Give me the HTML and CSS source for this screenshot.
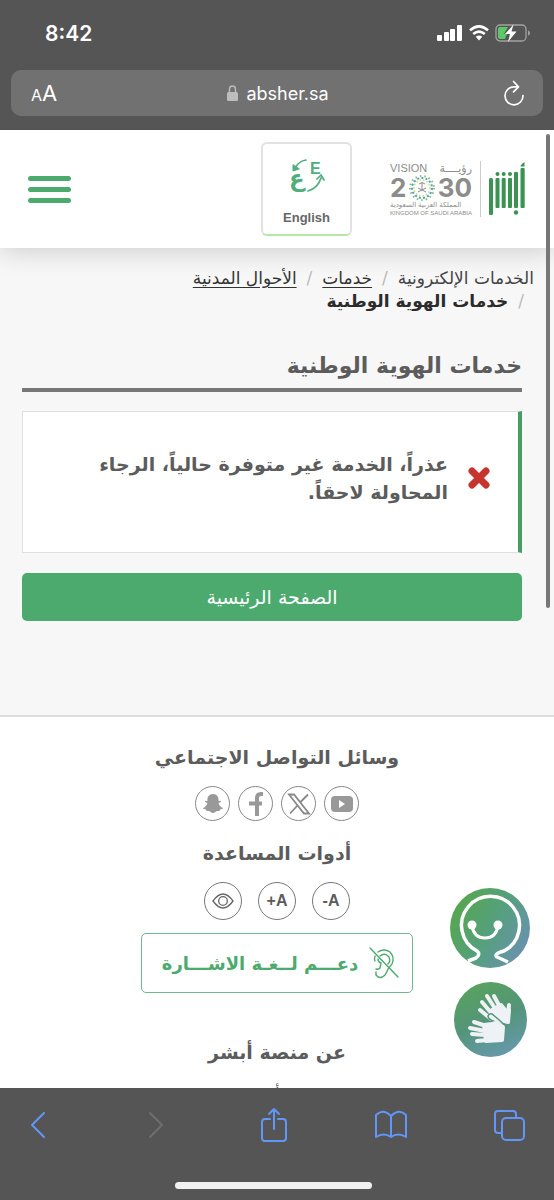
FILE: index.html
```html
<!DOCTYPE html>
<html lang="ar">
<head>
    <meta charset="UTF-8">
    <meta name="viewport" content="width=device-width, initial-scale=1">
    <title>خدمات الهوية الوطنية</title>
    <link rel="stylesheet" href="styles.css">
</head>
<body>
    <div class="browser-top">
        <div class="status-bar">
            <span class="clock">8:42</span>
            <div class="status-icons">
                <svg width="26" height="18" viewBox="0 0 26 18" fill="#fff">
                    <rect x="0" y="11" width="5" height="6" rx="1"/>
                    <rect x="7" y="8" width="5" height="9" rx="1"/>
                    <rect x="13" y="5" width="5" height="12" rx="1"/>
                    <rect x="20" y="1" width="5" height="16" rx="1"/>
                </svg>
                <svg width="20" height="18" viewBox="0 0 20 18" fill="none" stroke="#fff" stroke-width="2.6">
                    <path d="M1 6.2Q10-1.6 19 6.2"/>
                    <path d="M4.2 9.9Q10 5.2 15.8 9.9"/>
                    <path d="M6.7 12.8Q10 10.4 13.3 12.8L10 16.6Z" fill="#fff" stroke="none"/>
                </svg>
                <svg width="35" height="20" viewBox="0 0 35 20">
                    <rect x="1" y="2" width="30" height="16" rx="4" fill="none" stroke="#a3a3a3" stroke-width="1.3"/>
                    <path d="M33 7.5q2 .5 2 2.5t-2 2.5z" fill="#a3a3a3"/>
                    <path d="M5 4h8l-4 7h3l-2 5H5q-2 0-2-2V6q0-2 2-2z" fill="#5cc866"/>
                    <path d="M18.5 1.5L10 11h5l-2 8 8.5-10.5h-5z" fill="#fff"/>
                </svg>
            </div>
        </div>
        <div class="address-bar">
            <button class="text-size" aria-label="Text size"><small>A</small>A</button>
            <div class="address">
                <svg width="11" height="16" viewBox="0 0 11 16">
                    <path d="M2.5 8V4.5a3 3.5 0 0 1 6 0V8" fill="none" stroke="#bdbdbf" stroke-width="1.4"/>
                    <rect x="0" y="7" width="11" height="9" rx="1.5" fill="#bdbdbf"/>
                </svg>
                <span>absher.sa</span>
            </div>
            <button class="reload" aria-label="Reload">
                <svg width="22" height="26" viewBox="0 0 22 26" fill="none" stroke="#fff" stroke-width="1.7" stroke-linecap="round" stroke-linejoin="round">
                    <path d="M15 6.8H11A9 9 0 1 0 20 15.5"/>
                    <path d="M10.5 1.5l5 5.3-5 5"/>
                </svg>
            </button>
        </div>
    </div>

    <div class="site-frame">
        <div class="site" dir="rtl">
            <header class="site-header">
                <div class="brand">
                    <svg class="absher-logo" width="37" height="54" viewBox="0 0 37 54" role="img" aria-label="أبشر" fill="#3a9350">
                        <rect x="0" y="16" width="4" height="37" rx="1.5"/>
                        <rect x="6.5" y="16" width="4" height="30" rx="1"/>
                        <rect x="12.7" y="16" width="4" height="30" rx="1"/>
                        <rect x="19" y="16" width="4" height="30" rx="1"/>
                        <rect x="25" y="10" width="4" height="36" rx="1"/>
                        <rect x="31.5" y="6" width="4.2" height="40" rx="1"/>
                        <circle cx="8.5" cy="12" r="2"/>
                        <circle cx="14.7" cy="12" r="2"/>
                        <circle cx="21" cy="12" r="2"/>
                        <circle cx="27" cy="50.5" r="2.2"/>
                        <path d="M31.5 4.500q0-2 4-4.500v4.500z"/>
                    </svg>
                    <div class="vision" dir="ltr">
                        <div class="vision-title"><span>VISION</span><span>رؤيــــة</span></div>
                        <div class="vision-year">
                            <span>2</span>
                            <svg width="28" height="28" viewBox="0 0 28 28" fill="none">
                                <circle cx="14" cy="14" r="12" stroke="#7fbf80" stroke-width="2" stroke-dasharray="1.5 3"/>
                                <circle cx="14" cy="14" r="10" stroke="#5b9fba" stroke-width="2" stroke-dasharray="2 2.2"/>
                                <circle cx="14" cy="14" r="8" stroke="#c6d97b" stroke-width="1.5" stroke-dasharray="1.5 2"/>
                                <path d="M14 8v8M11 10q3-3 6 0M10 18l8-4M18 18l-8-4" stroke="#8c8c8c"/>
                            </svg>
                            <span>30</span>
                        </div>
                        <div class="vision-ar">المملكة العربية السعودية</div>
                        <div class="vision-en">KINGDOM OF SAUDI ARABIA</div>
                    </div>
                </div>
                <a class="lang" href="#" lang="en">
                    <svg width="38" height="38" viewBox="0 0 38 38" fill="none" stroke="#4fae7c" stroke-width="1.7" stroke-linecap="round">
                        <path d="M19 2Q12 3 8 10"/>
                        <path d="M6 7v6l6-2z" fill="#4fae7c" stroke-width="1"/>
                        <path d="M21 33q10-3 13-13M30 21l4-4 3 5"/>
                        <text class="lang-ar" x="2" y="28">ع</text>
                        <text class="lang-en" x="23" y="16">E</text>
                    </svg>
                    <span>English</span>
                </a>
                <button class="menu" aria-label="القائمة"><i></i><i></i><i></i></button>
            </header>

            <nav class="breadcrumb">
                <ol>
                    <li>الخدمات الإلكترونية</li>
                    <li><a href="#">خدمات</a></li>
                    <li><a href="#">الأحوال المدنية</a></li>
                    <li class="current">خدمات الهوية الوطنية</li>
                </ol>
            </nav>

            <main class="content">
                <h1>خدمات الهوية الوطنية</h1>
                <div class="alert" role="alert">
                    <svg width="22" height="22" viewBox="0 0 22 22" stroke="#c5352d" stroke-width="7" stroke-linecap="round">
                        <path d="M4 4l14 14M18 4L4 18"/>
                    </svg>
                    <p>عذراً، الخدمة غير متوفرة حالياً، الرجاء المحاولة لاحقاً.</p>
                </div>
                <a class="home-btn" href="#">الصفحة الرئيسية</a>
            </main>

            <footer class="site-footer">
                <h2>وسائل التواصل الاجتماعي</h2>
                <div class="social">
                    <a href="#" aria-label="YouTube">
                        <svg width="24" height="24" viewBox="0 0 24 24"><rect x="1" y="4" width="22" height="16" rx="4" fill="#999"/><path d="M9 8v8l6-4z" fill="#fff"/></svg>
                    </a>
                    <a href="#" aria-label="X">
                        <svg width="24" height="24" viewBox="0 0 24 24" fill="none" stroke="#888" stroke-width="1.8"><path d="M2 2.5h5l15 19h-5zM21 2.5l-8 8M10.5 13.5L3 21.5"/></svg>
                    </a>
                    <a href="#" aria-label="Facebook">
                        <svg width="24" height="26" viewBox="0 0 24 26" fill="none" stroke="#999" stroke-width="4"><path d="M19 3h-2q-4 0-4 4v18M5 12.5h13"/></svg>
                    </a>
                    <a href="#" aria-label="Snapchat">
                        <svg width="22" height="22" viewBox="0 0 22 22" fill="#999"><path d="M11 1c4 0 6 3 5.500 7l2-.3c1 .6.500 1.500-2 2.300.8 2.500 2 4 4.500 5-.3 1-1.500 1.300-3 1.500l-.6 1.500c-2.400-.3-3 0-4 1-1.500 1.300-3.300 1.300-4.800 0-1-1-1.600-1.300-4-1L4 16.500c-1.500-.2-2.700-.5-3-1.500 2.500-1 3.700-2.500 4.500-5-2.500-.8-3-1.700-2-2.300l2 .3C5 4 7 1 11 1z"/></svg>
                    </a>
                </div>
                <h2>أدوات المساعدة</h2>
                <div class="tools">
                    <button aria-label="تصغير الخط" dir="ltr">-A</button>
                    <button aria-label="تكبير الخط" dir="ltr">+A</button>
                    <button aria-label="التباين">
                        <svg width="22" height="16" viewBox="0 0 22 16" fill="none" stroke="#666" stroke-width="1.3"><path d="M1 8q10-14 20 0-10 14-20 0z"/><circle cx="11" cy="8" r="4.3"/></svg>
                    </button>
                </div>
                <button class="sign-btn">
                    <svg width="30" height="32" viewBox="0 0 30 32" fill="none" stroke="#4daa6f" stroke-width="1.4" stroke-linecap="round">
                        <path d="M1 1l28 29"/>
                        <path d="M9 5q6-4 12 0 5 5 2 12l-4 5q-1 3-3 6-5 5-9 0v-3"/>
                        <path d="M6 9q-1 3 0 5M11 9q5-4 9 1 2 4-1 7M9 12q0 3 3 4l-1 5q-2 2-4 1"/>
                    </svg>
                    <span>دعـــم لــغـة الاشـــارة</span>
                </button>
                <h2>عن منصة أبشر</h2>
                <a class="about-link" href="#">عن أبشر</a>
            </footer>
        </div>

        <div class="floating">
            <button class="assistant" aria-label="المساعد">
                <svg viewBox="0 0 80 80">
                    <defs>
                        <linearGradient id="assistant-fill" x1="0.1" y1="0.2" x2="1" y2="0.7">
                            <stop offset="0" stop-color="#56a652"/>
                            <stop offset="0.5" stop-color="#55a07d"/>
                            <stop offset="1" stop-color="#6a91b0"/>
                        </linearGradient>
                    </defs>
                    <circle cx="40" cy="40" r="40" fill="url(#assistant-fill)"/>
                    <g fill="none" stroke="#fff" stroke-width="3.5" stroke-linejoin="round">
                        <path d="M18 73l8-3q5-4 1-7A29 29 0 1 1 54 63q-11 3-7 6l11 5"/>
                        <path d="M22 38q2 12 13 12t13-12" stroke-width="3"/>
                    </g>
                    <circle cx="22" cy="37" r="4.5" fill="#fff"/>
                    <circle cx="48" cy="37" r="4.5" fill="#fff"/>
                </svg>
            </button>
            <button class="sign-help" aria-label="لغة الإشارة">
                <svg viewBox="0 0 73 75">
                    <defs>
                        <linearGradient id="sign-fill" x1="0.3" y1="0" x2="0.7" y2="1">
                            <stop offset="0" stop-color="#58a25e"/>
                            <stop offset="0.5" stop-color="#549579"/>
                            <stop offset="1" stop-color="#6699ad"/>
                        </linearGradient>
                    </defs>
                    <ellipse cx="36.5" cy="37.5" rx="36.5" ry="37.5" fill="url(#sign-fill)"/>
                    <g stroke="#eef1f5" stroke-width="4" stroke-linecap="round" stroke-linejoin="round" fill="#eef1f5">
                        <path d="M36 34l2-6 9-5 5 6 3-1-1 12-4-1z"/>
                        <path d="M26 28l11 9M28 20l11 13M33 14l9 14M40 14l7 13M55 23l-1 10"/>
                    </g>
                    <path d="M53 45l-9-8-6-5q-3-1-4 2 0 3 5 5z" fill="#eef1f5" stroke="#549579" stroke-width="1.5"/>
                    <g stroke="#eef1f5" stroke-width="4" stroke-linecap="round" stroke-linejoin="round" fill="#eef1f5">
                        <path d="M20 40l12 4M16 46l15 3M18 52l13 1M23 59l11-1"/>
                        <path d="M30 43l8-1 4-1 7 4-1 13-16 1z"/>
                    </g>
                </svg>
            </button>
        </div>
        <div class="scroll-thumb"></div>
    </div>

    <div class="browser-bottom">
        <div class="toolbar">
            <button aria-label="Back">
                <svg width="16" height="28" viewBox="0 0 16 28"><path d="M14 2L2 14l12 12"/></svg>
            </button>
            <button aria-label="Forward" disabled>
                <svg width="16" height="28" viewBox="0 0 16 28"><path d="M2 2l12 12L2 26"/></svg>
            </button>
            <button aria-label="Share">
                <svg width="28" height="36" viewBox="0 0 28 36"><path d="M10 12H5q-3 0-3 3v16q0 3 3 3h18q3 0 3-3V15q0-3-3-3h-5M14 22V2M9 7l5-5 5 5"/></svg>
            </button>
            <button aria-label="Bookmarks">
                <svg width="34" height="30" viewBox="0 0 34 30"><path d="M17 6Q9-2 2 5v22q8-5 15 0 7-5 15 0V5q-7-7-15 1zM17 6v21"/></svg>
            </button>
            <button aria-label="Tabs">
                <svg width="32" height="32" viewBox="0 0 32 32"><rect x="9" y="9" width="22" height="22" rx="4"/><path d="M9 24H5q-3 0-3-3V5q0-3 3-3h15q3 0 3 3v4"/></svg>
            </button>
        </div>
        <div class="home-indicator"></div>
    </div>
</body>
</html>
```

FILE: styles.css
```css
* {
    box-sizing: border-box;
}
body {
    margin: 0;
    height: 100vh;
    display: flex;
    flex-direction: column;
    background-color: #555;
    font-family: "DejaVu Sans", sans-serif;
}
button {
    margin: 0;
    padding: 0;
    border: none;
    background: none;
    font-family: inherit;
    cursor: pointer;
}
svg {
    display: block;
}

/* browser chrome */
.browser-top {
    padding: 0 11px 14px 11px;
    background-color: #555;
    color: white;
    font-family: Inter, sans-serif;
}
.status-bar {
    display: flex;
    justify-content: space-between;
    align-items: center;
    height: 70px;
    padding: 0 13px 4px 34px;
}
.clock {
    font-size: 21px;
    font-weight: 600;
}
.status-icons {
    display: flex;
    align-items: center;
    gap: 6px;
}
.address-bar {
    display: grid;
    grid-template-columns: 1fr auto 1fr;
    align-items: center;
    height: 46px;
    padding: 0 18px 0 20px;
    background-color: #717171;
    border-radius: 10px;
}
.text-size {
    justify-self: start;
    color: white;
    font-size: 22px;
}
.text-size small {
    font-size: 16px;
}
.address {
    display: flex;
    align-items: center;
    gap: 8px;
    font-size: 18px;
}
.reload {
    justify-self: end;
}

/* site */
.site-frame {
    position: relative;
    flex: 1;
    min-height: 0;
}
.site {
    height: 100%;
    overflow-y: auto;
    scrollbar-width: none;
    background-color: #f7f7f7;
    color: #5c5c5c;
}
.site-header {
    display: flex;
    align-items: center;
    padding: 12px 28px;
    background-color: white;
    box-shadow: 0 4px 24px rgba(0, 0, 0, 0.16);
}
.brand {
    display: flex;
    align-items: center;
}
.vision {
    margin-right: 8px;
    padding-right: 8px;
    border-right: 1px solid #ccc;
    color: #8c8c8c;
    font-family: "Liberation Sans", "DejaVu Sans", sans-serif;
    white-space: nowrap;
}
.vision-title {
    display: flex;
    justify-content: space-between;
    font-size: 11px;
    line-height: 14px;
}
.vision-year {
    display: flex;
    justify-content: space-between;
    align-items: center;
    height: 25px;
    font-family: Inter, sans-serif;
    font-size: 26px;
    font-weight: bold;
    line-height: 25px;
}
.vision-ar {
    font-size: 7px;
    line-height: 9px;
}
.vision-en {
    font-size: 6px;
    line-height: 8px;
}
.lang {
    display: flex;
    flex-direction: column;
    align-items: center;
    justify-content: space-between;
    width: 91px;
    height: 94px;
    margin-inline-start: 38px;
    padding: 14px 0 9px;
    border: 2px solid #e2e2e2;
    border-bottom-color: #b9e8a6;
    border-radius: 6px;
    color: #666;
    font-family: "Liberation Sans", Arial, sans-serif;
    font-size: 13px;
    font-weight: bold;
    text-decoration: none;
}
.lang svg {
    direction: ltr;
}
.lang text {
    fill: #4fae7c;
    stroke: none;
}
.lang-ar {
    font-family: "DejaVu Sans", sans-serif;
    font-size: 23px;
}
.lang-en {
    font-size: 16px;
}
.menu {
    display: flex;
    flex-direction: column;
    gap: 6px;
    width: 43px;
    margin-inline-start: auto;
}
.menu i {
    height: 5px;
    border-radius: 3px;
    background-color: #4daa6f;
}
.breadcrumb {
    padding: 19px 20px 0;
}
.breadcrumb ol {
    display: flex;
    flex-wrap: wrap;
    margin: 0;
    padding: 0;
    list-style: none;
    color: #444;
    font-size: 17px;
    line-height: 23px;
}
.breadcrumb li + li::before {
    content: "/";
    display: inline-block;
    padding: 0 10px;
    color: #bbb;
    font-weight: normal;
}
.breadcrumb a {
    color: #333;
    text-underline-offset: 3px;
}
.breadcrumb .current {
    color: #2b2b2b;
    font-weight: bold;
}
.content {
    padding: 37px 32px 94px 22px;
}
h1 {
    margin: 0 0 19px;
    padding-bottom: 6px;
    border-bottom: 4px solid #777;
    font-size: 22px;
    line-height: 32px;
}
.alert {
    display: flex;
    align-items: center;
    gap: 20px;
    min-height: 142px;
    margin-bottom: 20px;
    padding: 0 28px 8px 48px;
    border: 1px solid #e0e0e0;
    border-inline-start: 4px solid #479c63;
    background-color: white;
}
.alert svg {
    flex: none;
}
.alert p {
    margin: 0;
    font-size: 19px;
    font-weight: bold;
    line-height: 28px;
}
.home-btn {
    display: block;
    border-radius: 5px;
    background-color: #4daa6f;
    color: white;
    font-size: 19px;
    line-height: 48px;
    text-align: center;
    text-decoration: none;
}
.site-footer {
    display: flex;
    flex-direction: column;
    align-items: center;
    padding-top: 24px;
    border-top: 2px solid #ddd;
    background-color: white;
}
h2 {
    margin: 0;
    font-size: 19px;
    line-height: 32px;
}
.social,
.tools {
    display: flex;
}
.social {
    gap: 8px;
    margin: 13px 0 16px;
}
.social a,
.tools button {
    display: flex;
    align-items: center;
    justify-content: center;
    border-radius: 50%;
}
.social a {
    width: 35px;
    height: 35px;
    border: 1px solid #888;
}
.tools {
    gap: 16px;
    margin: 13px 0;
}
.tools button {
    width: 38px;
    height: 38px;
    border: 1px solid #777;
    color: #5c5c5c;
    font-family: "Liberation Sans", Arial, sans-serif;
    font-size: 16px;
    font-weight: bold;
}
.sign-btn {
    display: flex;
    align-items: center;
    gap: 11px;
    height: 60px;
    margin-bottom: 43px;
    padding: 0 13px 0 20px;
    border: 1px solid #6fb98d;
    border-radius: 5px;
    color: #4daa6f;
    font-size: 18px;
    font-weight: bold;
}
.about-link {
    margin-top: 11px;
    color: #5c5c5c;
    font-size: 15px;
    line-height: 28px;
    text-decoration: none;
}

/* overlays on the page */
.floating {
    position: absolute;
    right: 24px;
    bottom: 31px;
    display: flex;
    flex-direction: column;
    align-items: center;
    gap: 14px;
}
.assistant {
    width: 80px;
}
.sign-help {
    width: 73px;
}
.scroll-thumb {
    position: absolute;
    top: 4px;
    right: 4px;
    width: 4px;
    height: 474px;
    border-radius: 2px;
    background-color: #777;
}

.browser-bottom {
    padding: 18px 27px 11px 20px;
    background-color: #555;
}
.toolbar {
    display: flex;
    justify-content: space-between;
    align-items: center;
    height: 38px;
    margin-bottom: 38px;
}
.toolbar button {
    display: flex;
    justify-content: center;
    width: 36px;
}
.toolbar svg {
    fill: none;
    stroke: #6296f8;
    stroke-width: 2;
    stroke-linecap: round;
    stroke-linejoin: round;
}
.toolbar button:disabled svg {
    stroke: #6e6e6e;
}
.home-indicator {
    width: 39%;
    height: 7px;
    margin: 0 auto;
    border-radius: 4px;
    background-color: #f0f0f0;
}
```
